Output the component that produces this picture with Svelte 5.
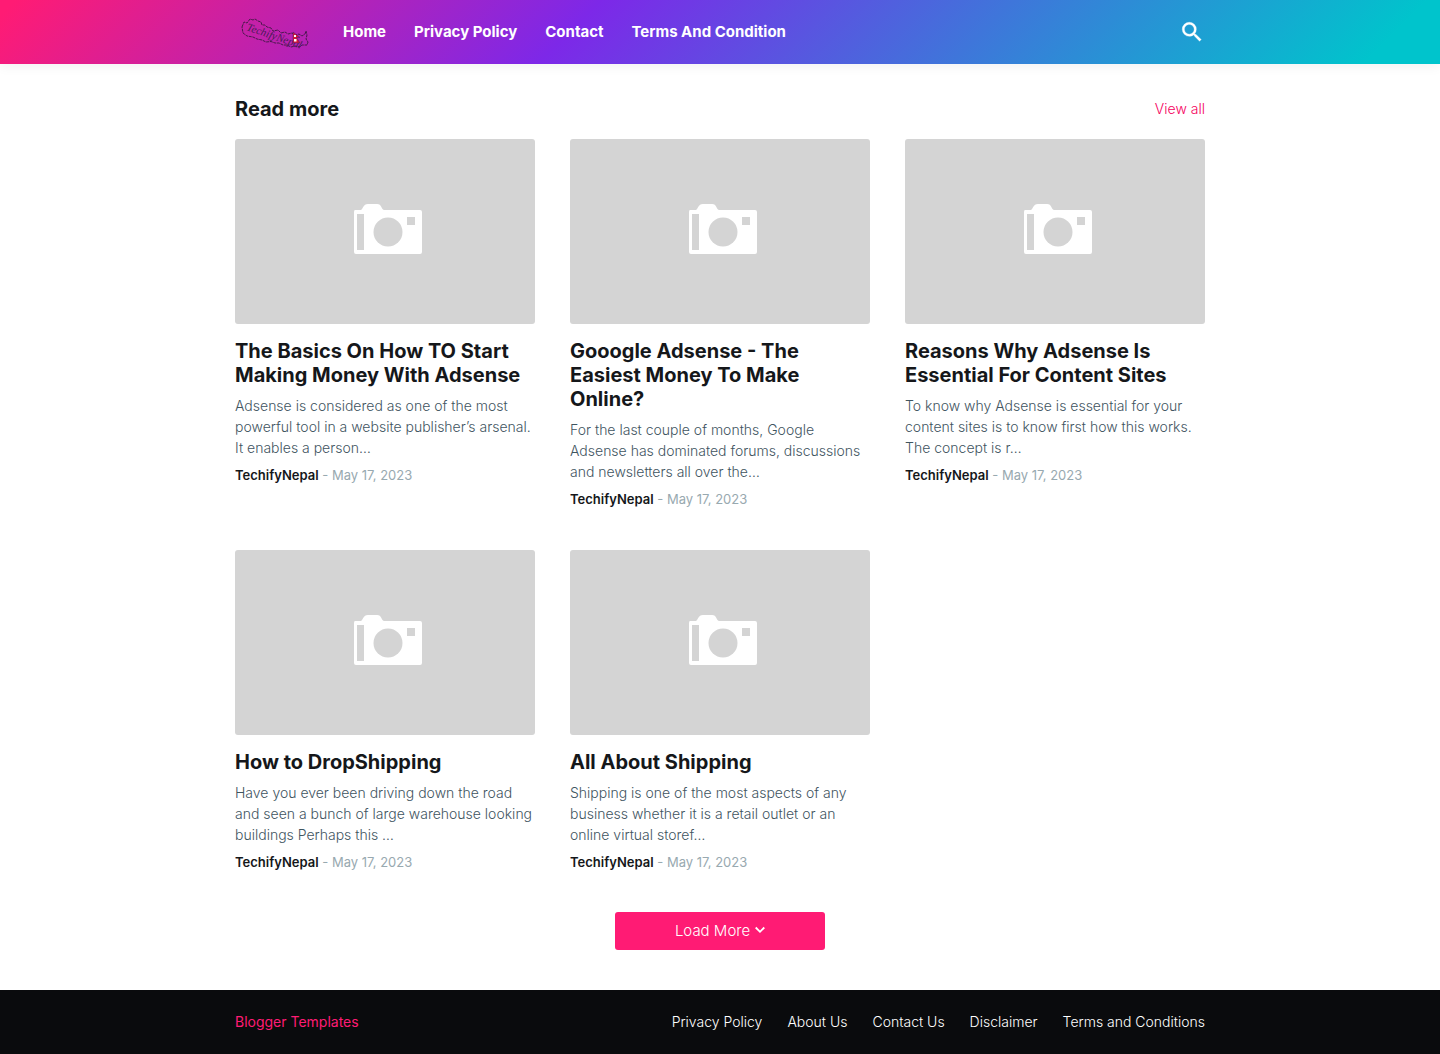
<script>
  const nav = ['Home', 'Privacy Policy', 'Contact', 'Terms And Condition'];
  const footerLinks = ['Privacy Policy', 'About Us', 'Contact Us', 'Disclaimer', 'Terms and Conditions'];
  const posts = [
    {
      title: 'The Basics On How TO Start Making Money With Adsense',
      text: 'Adsense is considered as one of the most powerful tool in a website publisher’s arsenal. It enables a person…'
    },
    {
      title: 'Gooogle Adsense - The Easiest Money To Make Online?',
      text: 'For the last couple of months, Google Adsense has dominated forums, discussions and newsletters all over the…'
    },
    {
      title: 'Reasons Why Adsense Is Essential For Content Sites',
      text: 'To know why Adsense is essential for your content sites is to know first how this works. The concept is r…'
    },
    {
      title: 'How to DropShipping',
      text: 'Have you ever been driving down the road and seen a bunch of large warehouse looking buildings Perhaps this …'
    },
    {
      title: 'All About Shipping',
      text: 'Shipping is one of the most aspects of any business whether it is a retail outlet or an online virtual storef…'
    }
  ];
</script>

<header class="header">
  <div class="wrap bar">
    <a class="logo" href="#home" aria-label="TechifyNepal">
      <svg width="80" height="36" viewBox="0 0 80 36">
        <path d="M7 13 L9 8 L12 9 L15 5 L18 6 L20 5 L23 7 L26 8 L27 11 L30 11 L32 13 L36 14 L38 17 L43 16 L46 19 L50 18 L53 20 L57 19 L60 21 L64 20 L67 22 L70 20 L71 17 L72 21 L71 25 L73 28 L72 31 L67 31 L65 33 L60 32 L56 33 L52 31 L48 31 L44 29 L40 29 L36 27.500 L31 28 L27 26 L22 25 L18 23 L12 22 L8 19 Z" fill="none" stroke="#2b1633" stroke-width=".8" stroke-dasharray="3 .7" />
        <text x="11" y="16" transform="rotate(19 11 16)" class="logo-text">TechifyNepal</text>
        <path d="M58 18 L65 23.500 H61.500 L65 29 H58 Z" fill="#dc1732" stroke="#34257c" stroke-width=".5" />
        <path d="M59 21h2v2h-2zM59 25h2.500v2.500h-2.500z" fill="#fff" />
      </svg>
    </a>
    <nav class="nav" aria-label="Main">
      {#each nav as item}
        <a href="#{item}">{item}</a>
      {/each}
    </nav>
    <button class="search" aria-label="Search">
      <svg width="26" height="26" viewBox="0 0 24 24" fill="#fff" stroke="#fff" stroke-width=".3">
        <path d="M15.500 14h-.79l-.28-.27A6.471 6.471 0 0 0 16 9.500 6.500 6.500 0 1 0 9.500 16c1.610 0 3.090-.59 4.230-1.570l.27.28v.79l5 4.990L20.490 19l-4.990-5zm-6 0C7.010 14 5 11.990 5 9.500S7.010 5 9.500 5 14 7.010 14 9.500 11.990 14 9.500 14z" />
      </svg>
    </button>
  </div>
</header>

<main class="wrap main">
  <div class="heading">
    <h1>Read more</h1>
    <a href="#all">View all</a>
  </div>

  <div class="grid">
    {#each posts as post}
      <article>
        <a class="thumb" href="#post" aria-label={post.title}>
          <svg width="72" height="56" viewBox="0 0 72 56">
            <path fill="#fff" d="M4 8h6c2-1 2-6 7-6h9c5 0 4 5 7 6h36q2 0 2 2v40q0 2-2 2H5q-2 0-2-2V10q0-2 1-2z" />
            <path fill="#d4d4d4" d="M6 12h7v36H6zM56 15h8v8h-8z" />
            <circle cx="37" cy="30" r="14.500" fill="#d4d4d4" />
          </svg>
        </a>
        <h2><a href="#post">{post.title}</a></h2>
        <p class="excerpt">{post.text}</p>
        <p class="meta"><strong>TechifyNepal</strong> - <time datetime="2023-05-17">May 17, 2023</time></p>
      </article>
    {/each}
  </div>

  <button class="more">
    Load More
    <svg width="10" height="8" viewBox="0 0 10 8" fill="none" stroke="#fff" stroke-width="1.800">
      <path d="M.7 1.500L5 5.800l4.300-4.300" />
    </svg>
  </button>
</main>

<footer class="footer">
  <div class="wrap foot">
    <a class="credit" href="#templates">Blogger Templates</a>
    <nav class="links" aria-label="Footer">
      {#each footerLinks as item}
        <a href="#{item}">{item}</a>
      {/each}
    </nav>
  </div>
</footer>

<style>
  :global(body) {
    margin: 0;
    background: #fff;
    font-family: Inter, 'Liberation Sans', sans-serif;
    font-size: 14px;
    font-weight: 300;
    color: #15171a;
  }
  a {
    color: inherit;
    text-decoration: none;
  }
  h1, h2, p {
    margin: 0;
  }
  button {
    border: 0;
    font: inherit;
    cursor: pointer;
  }
  svg {
    display: block;
  }
  .wrap {
    box-sizing: border-box;
    width: 100%;
    max-width: 1010px;
    margin: 0 auto;
    padding: 0 20px;
  }
  .header {
    background: linear-gradient(135deg, #ff1b74 1%, #7d28e8 40%, #00c4cc 95%);
    box-shadow: 0 2px 12px rgba(0, 0, 0, 0.06);
  }
  .bar {
    display: flex;
    align-items: center;
    gap: 28px;
    height: 64px;
  }
  .logo-text {
    font: italic 11px 'Liberation Serif', serif;
    fill: #4b1a56;
  }
  .nav {
    display: flex;
    flex: 1;
    gap: 28px;
    padding-bottom: 2px;
    color: #fff;
    font-size: 15px;
    font-weight: 700;
  }
  .search {
    padding: 0;
    background: none;
  }
  .heading {
    display: flex;
    align-items: center;
    justify-content: space-between;
    padding: 33px 0 18px;
    line-height: 24px;
  }
  h1 {
    font-size: 20px;
    font-weight: 700;
  }
  .heading a, .credit {
    color: #ff1b74;
  }
  .heading a {
    color: #f5005e;
  }
  .credit {
    font-weight: 400;
  }
  .grid {
    display: grid;
    grid-template-columns: repeat(auto-fill, minmax(280px, 1fr));
    gap: 41px 35px;
  }
  .thumb {
    display: flex;
    align-items: center;
    justify-content: center;
    height: 185px;
    padding: 0 0 4px 3px;
    box-sizing: border-box;
    border-radius: 3px;
    background: #d4d4d4;
  }
  h2 {
    padding: 15px 0 8px;
    font-size: 20px;
    font-weight: 700;
    line-height: 24px;
  }
  .excerpt {
    color: #3f555f;
    line-height: 21px;
  }
  .meta {
    padding-top: 7px;
    color: #98a9b0;
    font-size: 13px;
    font-weight: 400;
    line-height: 20px;
  }
  .meta strong {
    color: #15171a;
    font-weight: 600;
  }
  .more {
    display: flex;
    align-items: center;
    justify-content: center;
    gap: 5px;
    width: 210px;
    height: 38px;
    margin: 40px auto;
    padding: 0 0 2px;
    border-radius: 3px;
    background: #ff1b74;
    color: #fff;
    font-size: 15px;
  }
  .footer {
    background: #0a0b0d;
    color: #fff;
  }
  .foot {
    display: flex;
    align-items: center;
    justify-content: space-between;
    min-height: 64px;
    padding-bottom: 2px;
  }
  .links {
    display: flex;
    gap: 25px;
  }
</style>
